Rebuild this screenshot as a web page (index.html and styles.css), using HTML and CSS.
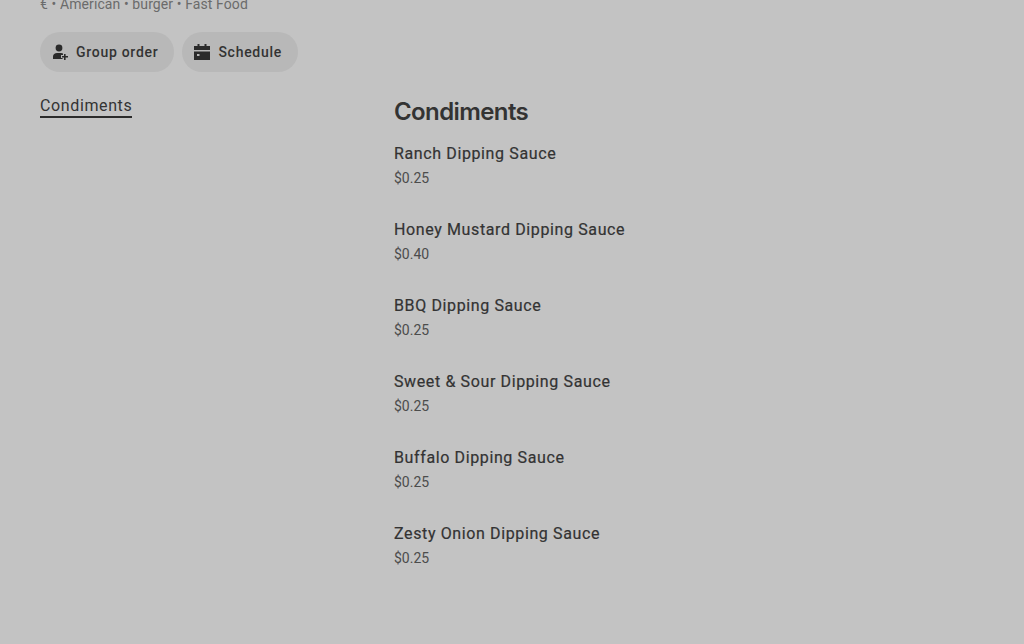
FILE: index.html
```html
<!DOCTYPE html>
<html lang="en">
<head>
  <meta charset="UTF-8" />
  <meta name="viewport" content="width=device-width, initial-scale=1.0"/>
  <title>Condiments</title>
  <link rel="stylesheet" href="styles.css">
</head>
<body>
  <div class="page">
    <p class="meta">€ • American • burger • Fast Food</p>

    <div class="actions">
      <button class="pill">
        <svg viewBox="0 0 16 16" width="16" height="16"><circle cx="7" cy="4" r="3.4"/><path d="M1 15v-2.500C1 10.300 2.800 9 5 9h4c.8 0 1.500.2 2 .5V11H9v3h1.600v1z"/><path d="M12 10h1.600v2H16v1.600h-2.400V16H12v-2.400H10V12h2z"/></svg>
        Group order
      </button>
      <button class="pill">
        <svg viewBox="0 0 16 16" width="16" height="16"><path d="M3.500 0h2v2h5V0h2v2H16v4H0V2h3.500z"/><path d="M0 7.500h16V16H0zM3 10v2h2.500v-2z" fill-rule="evenodd"/></svg>
        Schedule
      </button>
    </div>

    <div class="columns">
      <nav class="side">
        <a class="side-link">Condiments</a>
      </nav>
      <main class="menu">
        <h2>Condiments</h2>
        <div class="item"><h3>Ranch Dipping Sauce</h3><span>$0.25</span></div>
        <div class="item"><h3>Honey Mustard Dipping Sauce</h3><span>$0.40</span></div>
        <div class="item"><h3>BBQ Dipping Sauce</h3><span>$0.25</span></div>
        <div class="item"><h3>Sweet &amp; Sour Dipping Sauce</h3><span>$0.25</span></div>
        <div class="item"><h3>Buffalo Dipping Sauce</h3><span>$0.25</span></div>
        <div class="item"><h3>Zesty Onion Dipping Sauce</h3><span>$0.25</span></div>
      </main>
    </div>
  </div>
</body>
</html>
```

FILE: styles.css
```css
* { box-sizing: border-box; }
html, body { height: 100%; }
body {
  margin: 0;
  background: #c3c3c3;
  color: #333;
  font-family: Roboto, "Liberation Sans", sans-serif;
  overflow: hidden;
}

.page { padding: 0 40px; }

.meta {
  margin: -6px 0 0;
  height: 20px;
  font-size: 14px;
  line-height: 20px;
  letter-spacing: 0.1px;
  color: #6b6b6b;
}

/* buttons */
.actions {
  display: flex;
  gap: 8px;
  margin-top: 18px;
}
.pill {
  display: flex;
  align-items: center;
  gap: 8px;
  height: 40px;
  padding: 0 16px 0 12px;
  border: none;
  border-radius: 20px;
  background: #b8b8b8;
  color: #333;
  font: 500 14px Roboto, "Liberation Sans", sans-serif;
  letter-spacing: 0.72px;
}
.pill svg { fill: #2b2b2b; }

/* two columns */
.columns {
  display: flex;
  margin-top: 22px;
}
.side { width: 354px; flex: none; }
.side-link {
  display: inline-block;
  height: 24px;
  font-size: 16px;
  line-height: 24px;
  letter-spacing: 0.62px;
  color: #333;
  border-bottom: 2px solid #2b2b2b;
}

.menu h2 {
  margin: 0;
  height: 42px;
  padding-top: 4px;
  font-family: Inter, Roboto, sans-serif;
  font-size: 24px;
  font-weight: 600;
  line-height: 28px;
  letter-spacing: -0.6px;
  color: #333;
}
.item {
  height: 76px;
  padding-top: 6px;
}
.item h3 {
  margin: 0;
  font-size: 16px;
  font-weight: 400;
  line-height: 24px;
  letter-spacing: 0.62px;
  -webkit-text-stroke: 0.2px #333;
  color: #333;
}
.item span {
  display: block;
  margin-top: 2px;
  font-size: 14px;
  line-height: 20px;
  color: #4c4c4c;
}
```
